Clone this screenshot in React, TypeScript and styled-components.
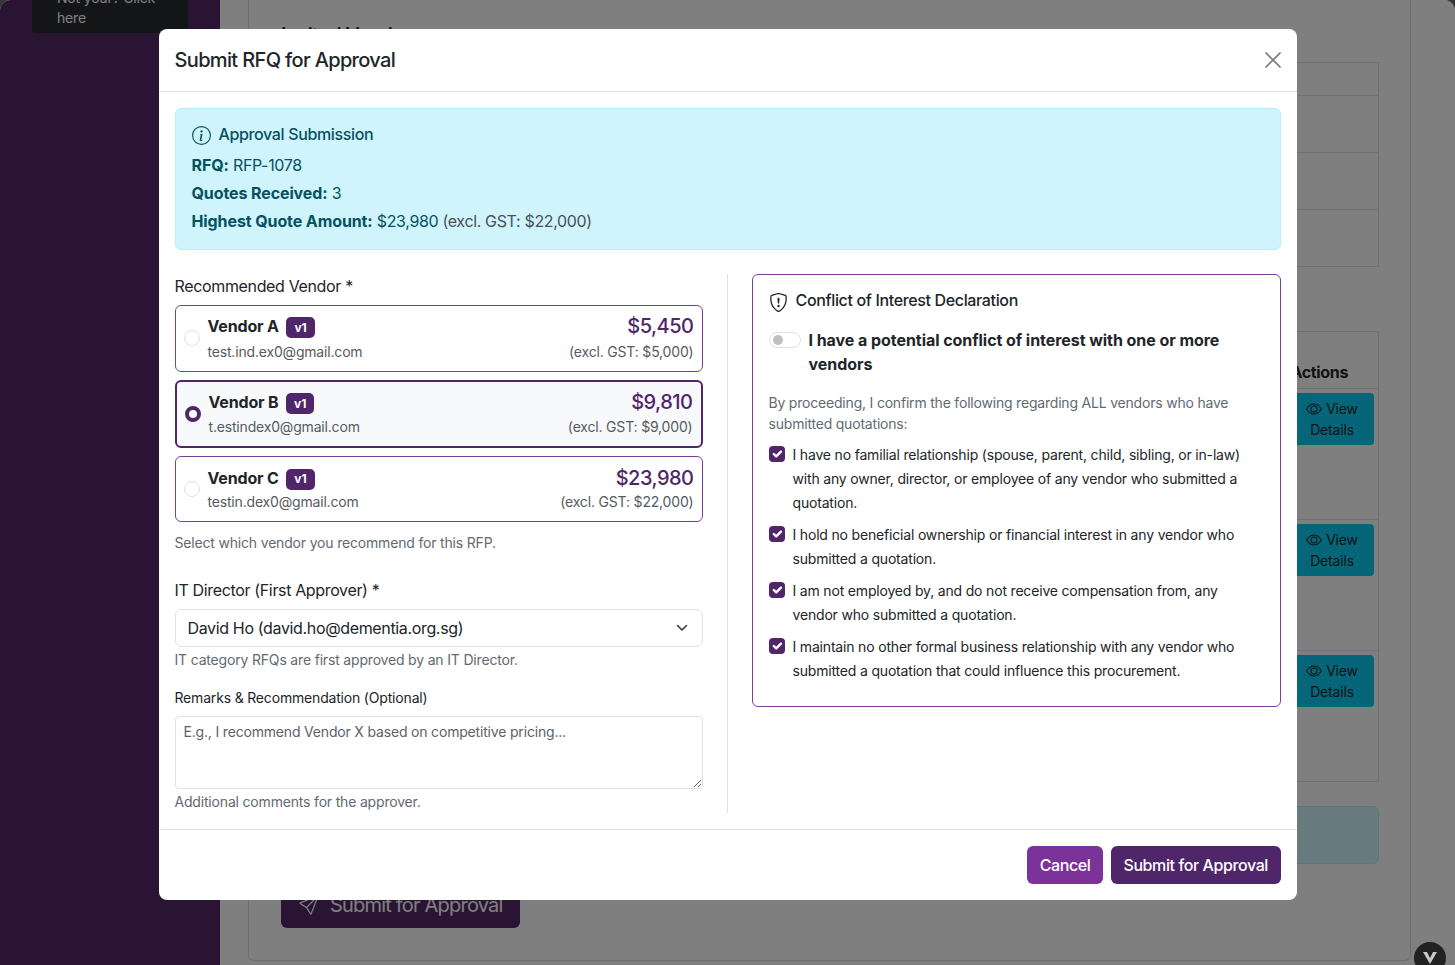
import React from "react";
import styled, { createGlobalStyle } from "styled-components";
import { BsInfoCircle, BsShieldExclamation, BsEye, BsSend } from "react-icons/bs";

const Global = createGlobalStyle`
  html, body { margin: 0; padding: 0; background: #343434; }
  * { box-sizing: border-box; }
  body {
    font-family: Inter, "Liberation Sans", sans-serif;
    font-size: 16px;
    letter-spacing: -0.35px;
    color: #212529;
  }
`;

const Page = styled.div`
  position: relative;
  display: flex;
  width: 1455px;
  height: 965px;
  overflow: hidden;
  border-radius: 11px 11px 0 0;
  background: #fff;
`;
const Sidebar = styled.aside`
  width: 220px;
  flex: none;
  background: #532866;
  padding: 0 32px;
`;
const UserBox = styled.div`
  margin-top: -12px;
  padding: 0 25px 5px;
  background: #292b2e;
  border-radius: 0 0 4px 4px;
  color: #fff;
  font-size: 14px;
  letter-spacing: -0.18px;
  line-height: 20px;
`;
const Main = styled.main`
  flex: 1;
  padding: 0 44px 4px 28px;
`;
const PageCard = styled.section`
  height: 100%;
  border: 1px solid #dcdcdc;
  border-top: 0;
  border-radius: 0 0 6px 6px;
  padding: 24px 31px 0 32px;
  display: flex;
  flex-direction: column;
`;
const PageHeading = styled.h5`
  margin: 0 0 16px;
  font-size: 20px;
  letter-spacing: -0.65px;
  line-height: 22px;
  font-weight: 500;
`;
const BgTable = styled.div<{ $mb: number }>`
  border: 1px solid #dee2e6;
  margin-bottom: ${(p) => p.$mb}px;
`;
const BgRow = styled.div<{ $h: number }>`
  height: ${(p) => p.$h}px;
  display: flex;
  justify-content: flex-end;
  align-items: flex-start;
  padding: 4px 4px 0 0;
  border-bottom: 1px solid #dee2e6;
  &:last-child { border-bottom: 0; }
`;
const BgHead = styled.div`
  margin: 25px 26px 0 0;
  font-weight: 700;
  line-height: 22px;
`;
const BgAction = styled.div`
  width: 84px;
  height: 52px;
  background: #0dcaf0;
  border-radius: 4px;
  font-size: 14px;
  letter-spacing: -0.18px;
  line-height: 21px;
  text-align: center;
  padding-top: 5px;
  svg { vertical-align: -3px; margin-right: 4px; }
`;
const BgAlert = styled.div`
  height: 58px;
  background: #cff4fc;
  border: 1px solid #b6effb;
  border-radius: 6px;
  margin-bottom: 18px;
`;
const BgButton = styled.div`
  align-self: flex-start;
  width: 239px;
  height: 46px;
  background: #532866;
  color: #fff;
  border-radius: 6px;
  font-size: 20px;
  letter-spacing: -0.8px;
  display: flex;
  align-items: center;
  gap: 11px;
  padding-left: 18px;
`;
const FloatBadge = styled.div`
  position: absolute;
  right: 9px;
  bottom: -9px;
  width: 32px;
  height: 32px;
  border-radius: 50%;
  background: #222;
  z-index: 3;
  display: flex;
  align-items: center;
  justify-content: center;
`;
const Overlay = styled.div`
  position: absolute;
  inset: 0;
  background: rgba(0, 0, 0, 0.5);
  display: flex;
  justify-content: center;
  padding-top: 29px;
`;
const Modal = styled.div`
  width: 1138px;
  height: 871px;
  background: #fff;
  border-radius: 8px;
  display: flex;
  flex-direction: column;
`;
const ModalHeader = styled.header`
  height: 63px;
  flex: none;
  display: flex;
  align-items: center;
  justify-content: space-between;
  padding: 0 16px;
  border-bottom: 1px solid #dee2e6;
`;
const Title = styled.h5`
  margin: 0;
  font-size: 20px;
  letter-spacing: -0.65px;
  font-weight: 500;
  line-height: 24px;
`;
const CloseButton = styled.button`
  border: 0;
  background: none;
  padding: 0;
  width: 16px;
  height: 16px;
  display: flex;
  color: #7f7f7f;
`;
const ModalBody = styled.div`
  flex: 1;
  padding: 16px;
`;
const InfoAlert = styled.div`
  height: 142px;
  background: #cff4fc;
  border: 1px solid #b6effb;
  border-radius: 6px;
  color: #055160;
  padding: 16px;
  margin-bottom: 24px;
`;
const AlertHeading = styled.div`
  display: flex;
  align-items: center;
  gap: 8px;
  font-weight: 500;
  line-height: 19px;
  margin-bottom: 9px;
  svg { margin: 1px 0 -1px; }
`;
const AlertLine = styled.p`
  margin: 0 0 4px;
  line-height: 24px;
  b { font-weight: 700; letter-spacing: -0.1px; }
`;
const Muted = styled.span`
  color: #495057;
`;
const Columns = styled.div`
  display: grid;
  grid-template-columns: 553px 1fr;
`;
const LeftCol = styled.div`
  padding-right: 24px;
  border-right: 1px solid #dee2e6;
  height: 539px;
`;
const RightCol = styled.div`
  padding-left: 24px;
`;
const FieldLabel = styled.label`
  display: block;
  line-height: 24px;
  margin-bottom: 7px;
`;
const VendorList = styled.div`
  display: flex;
  flex-direction: column;
  gap: 8px;
`;
const VendorCard = styled.div<{ $selected?: boolean; $h: number }>`
  height: ${(p) => p.$h}px;
  display: flex;
  align-items: center;
  gap: 8px;
  padding: 0 8px 1px 8px;
  border-radius: 6px;
  border: ${(p) => (p.$selected ? "2px solid #4f2669" : "1px solid #7b3f98")};
  background: ${(p) => (p.$selected ? "#f8f9fa" : "#fff")};
`;
const Radio = styled.span<{ $on?: boolean }>`
  width: 16px;
  height: 16px;
  flex: none;
  border-radius: 50%;
  border: ${(p) => (p.$on ? "4px solid #4f2669" : "1px solid #dee2e6")};
  background: #fff;
`;
const VendorMain = styled.div`
  flex: 1;
  display: flex;
  justify-content: space-between;
  align-items: center;
`;
const VendorStack = styled.div<{ $right?: boolean; $gap: number }>`
  display: flex;
  flex-direction: column;
  gap: ${(p) => p.$gap}px;
  text-align: ${(p) => (p.$right ? "right" : "left")};
`;
const NameRow = styled.div`
  display: flex;
  align-items: center;
  gap: 7.5px;
  height: 24px;
`;
const VendorName = styled.span`
  font-weight: 700;
  letter-spacing: -0.15px;
`;
const Version = styled.span`
  background: #4f2669;
  color: #fff;
  font-size: 12px;
  letter-spacing: 0;
  font-weight: 700;
  line-height: 12px;
  border-radius: 5px;
  padding: 4.5px 8px;
  margin-top: 3px;
`;
const Sub = styled.span`
  font-size: 14px;
  letter-spacing: -0.18px;
  line-height: 21px;
  color: #555b61;
`;
const Price = styled.span`
  font-size: 20px;
  letter-spacing: -0.5px;
  font-weight: 500;
  line-height: 24px;
  color: #4f2669;
`;
const Helper = styled.div<{ $mt: number }>`
  font-size: 14px;
  letter-spacing: -0.18px;
  line-height: 21px;
  color: #626a72;
  margin-top: ${(p) => p.$mt}px;
`;
const SpacedLabel = styled(FieldLabel)`
  margin-top: 25px;
`;
const SelectBox = styled.div`
  height: 38px;
  border: 1px solid #dee2e6;
  border-radius: 6px;
  display: flex;
  align-items: center;
  justify-content: space-between;
  padding: 0 12px;
`;
const SmallLabel = styled.label`
  display: block;
  font-size: 14px;
  letter-spacing: -0.18px;
  line-height: 21px;
  margin: 17px 0 8px;
`;
const Remarks = styled.textarea`
  display: block;
  width: 100%;
  height: 73px;
  border: 1px solid #dee2e6;
  border-radius: 4px;
  padding: 4px 8px;
  font: 14px/21px Inter, "Liberation Sans", sans-serif;
  letter-spacing: -0.18px;
  resize: vertical;
  outline: none;
  &::placeholder { color: #5c636a; opacity: 1; }
`;
const ConflictCard = styled.div`
  border: 1px solid #7b3f98;
  border-radius: 6px;
  padding: 16px 16px 15px;
`;
const ConflictTitle = styled.div`
  display: flex;
  align-items: center;
  gap: 8px;
  font-weight: 500;
  line-height: 19px;
  margin-bottom: 18px;
  svg { margin: 2px 0 -2px; }
`;
const SwitchRow = styled.div`
  display: flex;
  gap: 8px;
  font-weight: 700;
  letter-spacing: -0.05px;
  line-height: 24px;
  margin-bottom: 16px;
`;
const SwitchTrack = styled.span`
  width: 32px;
  height: 16px;
  flex: none;
  margin-top: 4px;
  border: 1px solid #dee2e6;
  border-radius: 8px;
  padding: 2px 3px;
  background: #fff;
  display: flex;
  &::before {
    content: "";
    width: 10px;
    height: 10px;
    border-radius: 50%;
    background: #bfbfbf;
  }
`;
const Intro = styled.p`
  margin: 0 0 9px;
  font-size: 14px;
  letter-spacing: -0.2px;
  line-height: 21px;
  color: #626a72;
`;
const CheckRow = styled.div`
  display: flex;
  gap: 8px;
  font-size: 14px;
  letter-spacing: -0.18px;
  line-height: 24px;
  margin-bottom: 8px;
`;
const CheckBox = styled.span`
  width: 16px;
  height: 16px;
  flex: none;
  margin-top: 3px;
  background: #4f2669;
  border-radius: 4px;
  display: flex;
`;
const ModalFooter = styled.footer`
  height: 71px;
  flex: none;
  border-top: 1px solid #dee2e6;
  display: flex;
  align-items: center;
  justify-content: flex-end;
  gap: 8px;
  padding: 0 16px;
`;
const Button = styled.button<{ $primary?: boolean }>`
  height: 38px;
  padding: 0 12.5px;
  border: 0;
  border-radius: 6px;
  color: #fff;
  font: 500 16px/24px Inter, "Liberation Sans", sans-serif;
  letter-spacing: -0.4px;
  background: ${(p) => (p.$primary ? "#4f2669" : "#7b3399")};
`;

const vendors = [
  { name: "Vendor A", email: "test.ind.ex0@gmail.com", price: "$5,450", net: "$5,000", h: 67, gap: 3 },
  { name: "Vendor B", email: "t.estindex0@gmail.com", price: "$9,810", net: "$9,000", h: 68, gap: 2, selected: true },
  { name: "Vendor C", email: "testin.dex0@gmail.com", price: "$23,980", net: "$22,000", h: 66, gap: 1 },
];

const declarations = [
  "I have no familial relationship (spouse, parent, child, sibling, or in-law) with any owner, director, or employee of any vendor who submitted a quotation.",
  "I hold no beneficial ownership or financial interest in any vendor who submitted a quotation.",
  "I am not employed by, and do not receive compensation from, any vendor who submitted a quotation.",
  "I maintain no other formal business relationship with any vendor who submitted a quotation that could influence this procurement.",
];

const Action = () => (
  <BgAction>
    <BsEye size={16} />
    View
    <br />
    Details
  </BgAction>
);

export default function App() {
  return (
    <Page>
      <Global />
      <Sidebar>
        <UserBox>Not your? Click here</UserBox>
      </Sidebar>
      <Main>
        <PageCard>
          <PageHeading>Invited Vendors</PageHeading>
          <BgTable $mb={64}>
            <BgRow $h={33} />
            <BgRow $h={57} />
            <BgRow $h={57} />
            <BgRow $h={56} />
          </BgTable>
          <BgTable $mb={24}>
            <BgRow $h={57}>
              <BgHead>Actions</BgHead>
            </BgRow>
            <BgRow $h={131}><Action /></BgRow>
            <BgRow $h={131}><Action /></BgRow>
            <BgRow $h={130}><Action /></BgRow>
          </BgTable>
          <BgAlert />
          <BgButton>
            <BsSend size={20} />
            Submit for Approval
          </BgButton>
        </PageCard>
      </Main>
      <Overlay>
        <Modal>
          <ModalHeader>
            <Title>Submit RFQ for Approval</Title>
            <CloseButton aria-label="Close">
              <svg width="16" height="16" viewBox="0 0 16 16" fill="none" stroke="currentColor" strokeWidth="1.6">
                <path d="M0.5 0.5 15.5 15.5M15.5 0.5 0.5 15.5" />
              </svg>
            </CloseButton>
          </ModalHeader>
          <ModalBody>
            <InfoAlert>
              <AlertHeading>
                <BsInfoCircle size={19} />
                Approval Submission
              </AlertHeading>
              <AlertLine><b>RFQ:</b> RFP-1078</AlertLine>
              <AlertLine><b>Quotes Received:</b> 3</AlertLine>
              <AlertLine>
                <b>Highest Quote Amount:</b> $23,980 <Muted>(excl. GST: $22,000)</Muted>
              </AlertLine>
            </InfoAlert>
            <Columns>
              <LeftCol>
                <FieldLabel>Recommended Vendor *</FieldLabel>
                <VendorList>
                  {vendors.map((v) => (
                    <VendorCard key={v.name} $selected={v.selected} $h={v.h}>
                      <Radio $on={v.selected} />
                      <VendorMain>
                        <VendorStack $gap={v.gap}>
                          <NameRow>
                            <VendorName>{v.name}</VendorName>
                            <Version>v1</Version>
                          </NameRow>
                          <Sub>{v.email}</Sub>
                        </VendorStack>
                        <VendorStack $right $gap={v.gap}>
                          <Price>{v.price}</Price>
                          <Sub>(excl. GST: {v.net})</Sub>
                        </VendorStack>
                      </VendorMain>
                    </VendorCard>
                  ))}
                </VendorList>
                <Helper $mt={10}>Select which vendor you recommend for this RFP.</Helper>
                <SpacedLabel>IT Director (First Approver) *</SpacedLabel>
                <SelectBox>
                  David Ho (david.ho@dementia.org.sg)
                  <svg width="16" height="16" viewBox="0 0 16 16" fill="none" stroke="#343a40" strokeWidth="1.6" strokeLinecap="round" strokeLinejoin="round">
                    <path d="m3.5 5.5 4.5 4.5 4.5-4.5" />
                  </svg>
                </SelectBox>
                <Helper $mt={2}>IT category RFQs are first approved by an IT Director.</Helper>
                <SmallLabel>Remarks &amp; Recommendation (Optional)</SmallLabel>
                <Remarks placeholder="E.g., I recommend Vendor X based on competitive pricing..." />
                <Helper $mt={2}>Additional comments for the approver.</Helper>
              </LeftCol>
              <RightCol>
                <ConflictCard>
                  <ConflictTitle>
                    <BsShieldExclamation size={19} />
                    Conflict of Interest Declaration
                  </ConflictTitle>
                  <SwitchRow>
                    <SwitchTrack />
                    I have a potential conflict of interest with one or more vendors
                  </SwitchRow>
                  <Intro>By proceeding, I confirm the following regarding ALL vendors who have submitted quotations:</Intro>
                  {declarations.map((d) => (
                    <CheckRow key={d}>
                      <CheckBox>
                        <svg width="16" height="16" viewBox="0 0 20 20" fill="none" stroke="#fff" strokeWidth="3" strokeLinecap="round" strokeLinejoin="round">
                          <path d="m6 10 3 3 6-6" />
                        </svg>
                      </CheckBox>
                      {d}
                    </CheckRow>
                  ))}
                </ConflictCard>
              </RightCol>
            </Columns>
          </ModalBody>
          <ModalFooter>
            <Button>Cancel</Button>
            <Button $primary>Submit for Approval</Button>
          </ModalFooter>
        </Modal>
      </Overlay>
      <FloatBadge>
        <svg width="14" height="12" viewBox="0 0 14 12" fill="#c8c8c8">
          <path d="M0 0h4l3 6 3-6h4l-7 12z" />
        </svg>
      </FloatBadge>
    </Page>
  );
}
